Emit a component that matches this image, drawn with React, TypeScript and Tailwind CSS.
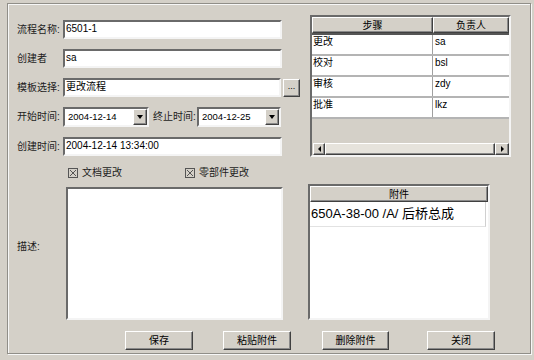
import React from "react";

const sunken =
  "border-2 border-t-[#6a6a6a] border-l-[#6a6a6a] border-r-[#f4f4f4] border-b-[#f4f4f4]";
const raised =
  "border border-t-white border-l-white border-r-[#404040] border-b-[#404040] shadow-[inset_-1px_-1px_0_#8a8a8a]";

const steps = [
  { step: "更改", owner: "sa" },
  { step: "校对", owner: "bsl" },
  { step: "审核", owner: "zdy" },
  { step: "批准", owner: "lkz" },
];

const Label = ({ children, w }: { children: React.ReactNode; w: string }) => (
  <div className={`${w} shrink-0 whitespace-nowrap text-[10px] leading-[14px] text-[#1c1c1c]`}>
    {children}
  </div>
);

const TextField = ({ value }: { value: string }) => (
  <div className={`${sunken} w-[219px] h-[19px] bg-white px-[1px] text-[10px] leading-[13px]`}>
    {value}
  </div>
);

const Combo = ({ value, w }: { value: string; w: string }) => (
  <div className={`${sunken} ${w} h-[20px] bg-white flex items-center`}>
    <span className="flex-1 pl-[3px] text-[9.5px]">{value}</span>
    <div className={`${raised} w-[14px] h-full bg-[#d4d0c8] flex items-center justify-center`}>
      <div className="w-0 h-0 border-x-[3px] border-x-transparent border-t-[4px] border-t-black" />
    </div>
  </div>
);

const CheckBox = ({ label, w }: { label: string; w: string }) => (
  <div className={`${w} flex items-center gap-[4px]`}>
    <svg width="10" height="10" viewBox="0 0 10 10">
      <rect x="0.5" y="0.5" width="9" height="9" fill="none" stroke="#555" />
      <path d="M2 2 L8 8 M8 2 L2 8" stroke="#555" strokeWidth="1" />
    </svg>
    <span className="text-[10px] leading-[14px] text-[#1c1c1c]">{label}</span>
  </div>
);

const Button = ({ children, className }: { children: React.ReactNode; className: string }) => (
  <div
    className={`${raised} ${className} h-[19px] bg-[#d4d0c8] flex items-center justify-center text-[10px]`}
  >
    {children}
  </div>
);

export default function App() {
  return (
    <div className="w-[534px] h-[360px] overflow-hidden bg-[#d4d0c8] pt-[3px] pl-[7px] text-black font-['Liberation_Sans','Noto_Sans_CJK_SC',sans-serif]">
      <div className="w-[524px] h-[351px] border border-[#908e88] shadow-[inset_1px_1px_0_#f7f7f7,1px_1px_0_#f7f7f7] pt-[11px] pl-[9px]">
        <div className="flex gap-[8px]">
          {/* Left form */}
          <div className="w-[283px] pt-[5px] flex flex-col">
            <div className="flex items-center h-[19px]">
              <Label w="w-[46px]">流程名称:</Label>
              <TextField value="6501-1" />
            </div>
            <div className="flex items-center h-[19px] mt-[10px]">
              <Label w="w-[46px]">创建者</Label>
              <TextField value="sa" />
            </div>
            <div className="flex items-center h-[19px] mt-[10px]">
              <Label w="w-[46px]">模板选择:</Label>
              <TextField value="更改流程" />
              <div
                className={`${raised} ml-[2px] w-[17px] h-[18px] bg-[#d4d0c8] flex items-center justify-center text-[9px] leading-none pb-[3px]`}
              >
                ...
              </div>
            </div>
            <div className="flex items-center h-[20px] mt-[10px]">
              <Label w="w-[46px]">开始时间:</Label>
              <Combo value="2004-12-14" w="w-[86px]" />
              <Label w="w-[48px] pl-[4px]">终止时间:</Label>
              <Combo value="2004-12-25" w="w-[84px]" />
            </div>
            <div className="flex items-center h-[19px] mt-[10px]">
              <Label w="w-[46px]">创建时间:</Label>
              <TextField value="2004-12-14 13:34:00" />
            </div>
            <div className="flex items-center h-[14px] mt-[10px] pl-[51px]">
              <CheckBox label="文档更改" w="w-[117px]" />
              <CheckBox label="零部件更改" w="w-[90px]" />
            </div>
            <div className="flex items-start mt-[7px]">
              <Label w="w-[49px] pt-[53px]">描述:</Label>
              <div className={`${sunken} w-[217px] h-[133px] bg-white`} />
            </div>
          </div>

          {/* Right column */}
          <div className="w-[203px] flex flex-col">
            <div className={`${sunken} ml-[2px] w-[201px] h-[142px] bg-[#d4d0c8] flex flex-col`}>
              <div className="flex h-[18px] border-b-2 border-b-[#555] text-[10px]">
                <div className={`${raised} w-[121px] flex items-center justify-center`}>步骤</div>
                <div className={`${raised} flex-1 flex items-center justify-center`}>负责人</div>
              </div>
              {steps.map((r) => (
                <div key={r.step} className="flex h-[21px] bg-white border-b-2 border-b-[#b4b4b4] text-[10px]">
                  <div className="w-[121px] border-r border-r-[#a0a0a0] pl-[1px] leading-[14px]">
                    {r.step}
                  </div>
                  <div className="flex-1 pl-[2px] leading-[14px]">{r.owner}</div>
                </div>
              ))}
              <div className="flex-1" />
              <div className="flex h-[12px] pl-[1px]">
                <div className={`${raised} w-[12px] bg-[#d4d0c8] flex items-center justify-center`}>
                  <div className="w-0 h-0 border-y-[3px] border-y-transparent border-r-[3px] border-r-black" />
                </div>
                <div className={`${raised} flex-1 bg-[#e6e3dc]`} />
                <div className={`${raised} w-[14px] bg-[#d4d0c8] flex items-center justify-center`}>
                  <div className="w-0 h-0 border-y-[3px] border-y-transparent border-l-[3px] border-l-black" />
                </div>
              </div>
            </div>

            <div className={`${sunken} mt-[27px] w-[182px] h-[136px] bg-white flex flex-col`}>
              <div className={`${raised} h-[16px] bg-[#d4d0c8] flex items-center justify-center text-[10px]`}>
                附件
              </div>
              <div className="h-[25px] mr-[2px] flex items-center pl-[1px] text-[13px] border-b border-b-[#e2e2e2] border-r border-r-[#d0d0d0]">
                650A-38-00 /A/ 后桥总成
              </div>
            </div>
          </div>
        </div>

        {/* Buttons */}
        <div className="flex mt-[11px]">
          <Button className="ml-[108px] w-[68px]">保存</Button>
          <Button className="ml-[30px] w-[68px]">粘贴附件</Button>
          <Button className="ml-[31px] w-[67px]">删除附件</Button>
          <Button className="ml-[38px] w-[68px]">关闭</Button>
        </div>
      </div>
    </div>
  );
}
